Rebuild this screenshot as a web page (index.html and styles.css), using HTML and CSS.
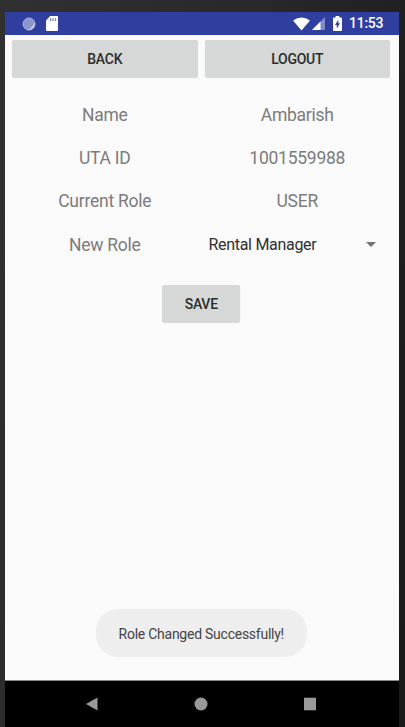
FILE: index.html
```html
<!DOCTYPE html>
<html lang="en">
<head>
<meta charset="utf-8">
<title>Change Role</title>
<link rel="stylesheet" href="styles.css">
</head>
<body>
<div class="device">
  <div class="screen">
    <header class="status">
      <svg class="sync" viewBox="0 0 14 14"><circle cx="7" cy="7" r="6" fill="#8c97d0"/><path d="M12.3 5A6 6 0 0 1 5 13Q11 11.500 12.300 5Z" fill="#d5daf2"/><circle cx="7" cy="7" r="6" fill="none" stroke="#a9b2de" stroke-width="1"/></svg>
      <svg class="sd" viewBox="0 0 12 15"><path d="M4.200 0H11Q12 0 12 1V14Q12 15 11 15H1Q0 15 0 14V4.500Z" fill="#fff"/><path d="M4.500 2.200V5M7 2.200V5M9.500 2.200V5" stroke="#7682c4" stroke-width="1.300"/></svg>
      <span class="spacer"></span>
      <svg class="wifi" viewBox="0 0 18 14"><path d="M0 3.200Q9-3 18 3.200L9 14Z" fill="#fff"/></svg>
      <svg class="signal" viewBox="0 0 13 13"><path d="M13 0V13H0Z" fill="#808bc8"/><path d="M8.500 4.500V13H0Z" fill="#fff"/></svg>
      <svg class="battery" viewBox="0 0 9 15"><path d="M2.700 0H6.300V1.500H8Q9 1.500 9 2.500V14Q9 15 8 15H1Q0 15 0 14V2.500Q0 1.500 1 1.500H2.700Z" fill="#fff"/><path d="M5.300 3.800V7.200H7L3.800 12.600V9H2Z" fill="#303f9f"/></svg>
      <time class="clock">11:53</time>
    </header>
    <main class="content">
      <div class="actions">
        <button class="btn">BACK</button>
        <button class="btn">LOGOUT</button>
      </div>
      <div class="form">
        <span>Name</span><span>Ambarish</span>
        <span>UTA ID</span><span>1001559988</span>
        <span>Current Role</span><span>USER</span>
        <span>New Role</span>
        <div class="spinner"><span>Rental Manager</span><svg class="caret" viewBox="0 0 10 5"><path d="M0 0H10L5 5Z" fill="#737373"/></svg></div>
      </div>
      <button class="btn save">SAVE</button>
      <div class="toast">Role Changed Successfully!</div>
    </main>
    <nav class="nav">
      <svg viewBox="0 0 14 14"><path d="M1 7L12.500 .5V13.500Z" fill="#999"/></svg>
      <svg viewBox="0 0 14 14"><circle cx="7" cy="7" r="6.500" fill="#999"/></svg>
      <svg viewBox="0 0 14 14"><path d="M1 .7H13V13.300H1Z" fill="#999"/></svg>
    </nav>
  </div>
</div>
</body>
</html>
```
FILE: styles.css
```css
* { box-sizing: border-box; }
body { margin: 0; font-family: Roboto, sans-serif; }
svg { display: block; flex: none; }
.device {
  height: 727px;
  padding: 12px 6px 0 4.5px;
  background: linear-gradient(100deg, #303030, #292929 45%, #191919);
  overflow: hidden;
}
.screen { height: 715px; display: flex; flex-direction: column; background: #fafafa; }
.status {
  height: 23px;
  display: flex;
  align-items: center;
  padding: 0 15px 0 17.5px;
  background: #303f9f;
  color: #fff;
}
.sync { width: 14px; height: 14px; }
.sd { width: 12px; height: 15px; margin-left: 10px; }
.spacer { flex: 1; }
.wifi { width: 17px; height: 14px; }
.signal { width: 13px; height: 13px; margin-left: 2px; }
.battery { width: 9px; height: 15px; margin-left: 8px; }
.clock { width: 35px; margin-left: 7px; font-size: 14px; font-weight: 500; line-height: 25px; letter-spacing: -.25px; }
.content {
  height: 646px;
  display: flex;
  flex-direction: column;
  align-items: center;
  border-bottom: 1px solid #888;
}
.actions { align-self: stretch; display: flex; gap: 7px; padding: 5px 9px 0 7.5px; }
.btn {
  flex: 1;
  height: 37px;
  padding: 1px 0 0;
  border: 0;
  border-radius: 2px;
  background: #d6d8d7;
  box-shadow: 0 1px 1px rgba(0, 0, 0, .14);
  color: #2c2c2c;
  font: 500 14px/37px Roboto, sans-serif;
  letter-spacing: -.25px;
}
.form {
  align-self: stretch;
  display: grid;
  grid-template-columns: 1fr 1fr;
  grid-auto-rows: 43.3px;
  gap: 0 7px;
  margin: 16.2px 9px 0 7.5px;
  align-items: center;
  text-align: center;
  color: #7c7c7c;
  font-size: 17.5px;
  letter-spacing: -.25px;
}
.spinner {
  display: flex;
  align-items: center;
  justify-content: space-between;
  padding: 0 14.5px 0 4px;
  color: #303030;
  font-size: 16px;
  letter-spacing: -.3px;
}
.caret { width: 10px; height: 5px; }
.save { flex: none; width: 78px; margin: 18.6px 1px 0 0; }
.toast {
  height: 48px;
  width: 211px;
  margin: auto 1px 23px 0;
  border-radius: 22px;
  background: #eee;
  color: #444;
  font-size: 14px;
  letter-spacing: -.25px;
  line-height: 50px;
  text-align: center;
}
.nav {
  flex: 1;
  display: flex;
  justify-content: space-between;
  align-items: center;
  padding: 0 82.5px 0 80px;
  background: #000;
}
.nav svg { width: 14px; height: 14px; }
```
